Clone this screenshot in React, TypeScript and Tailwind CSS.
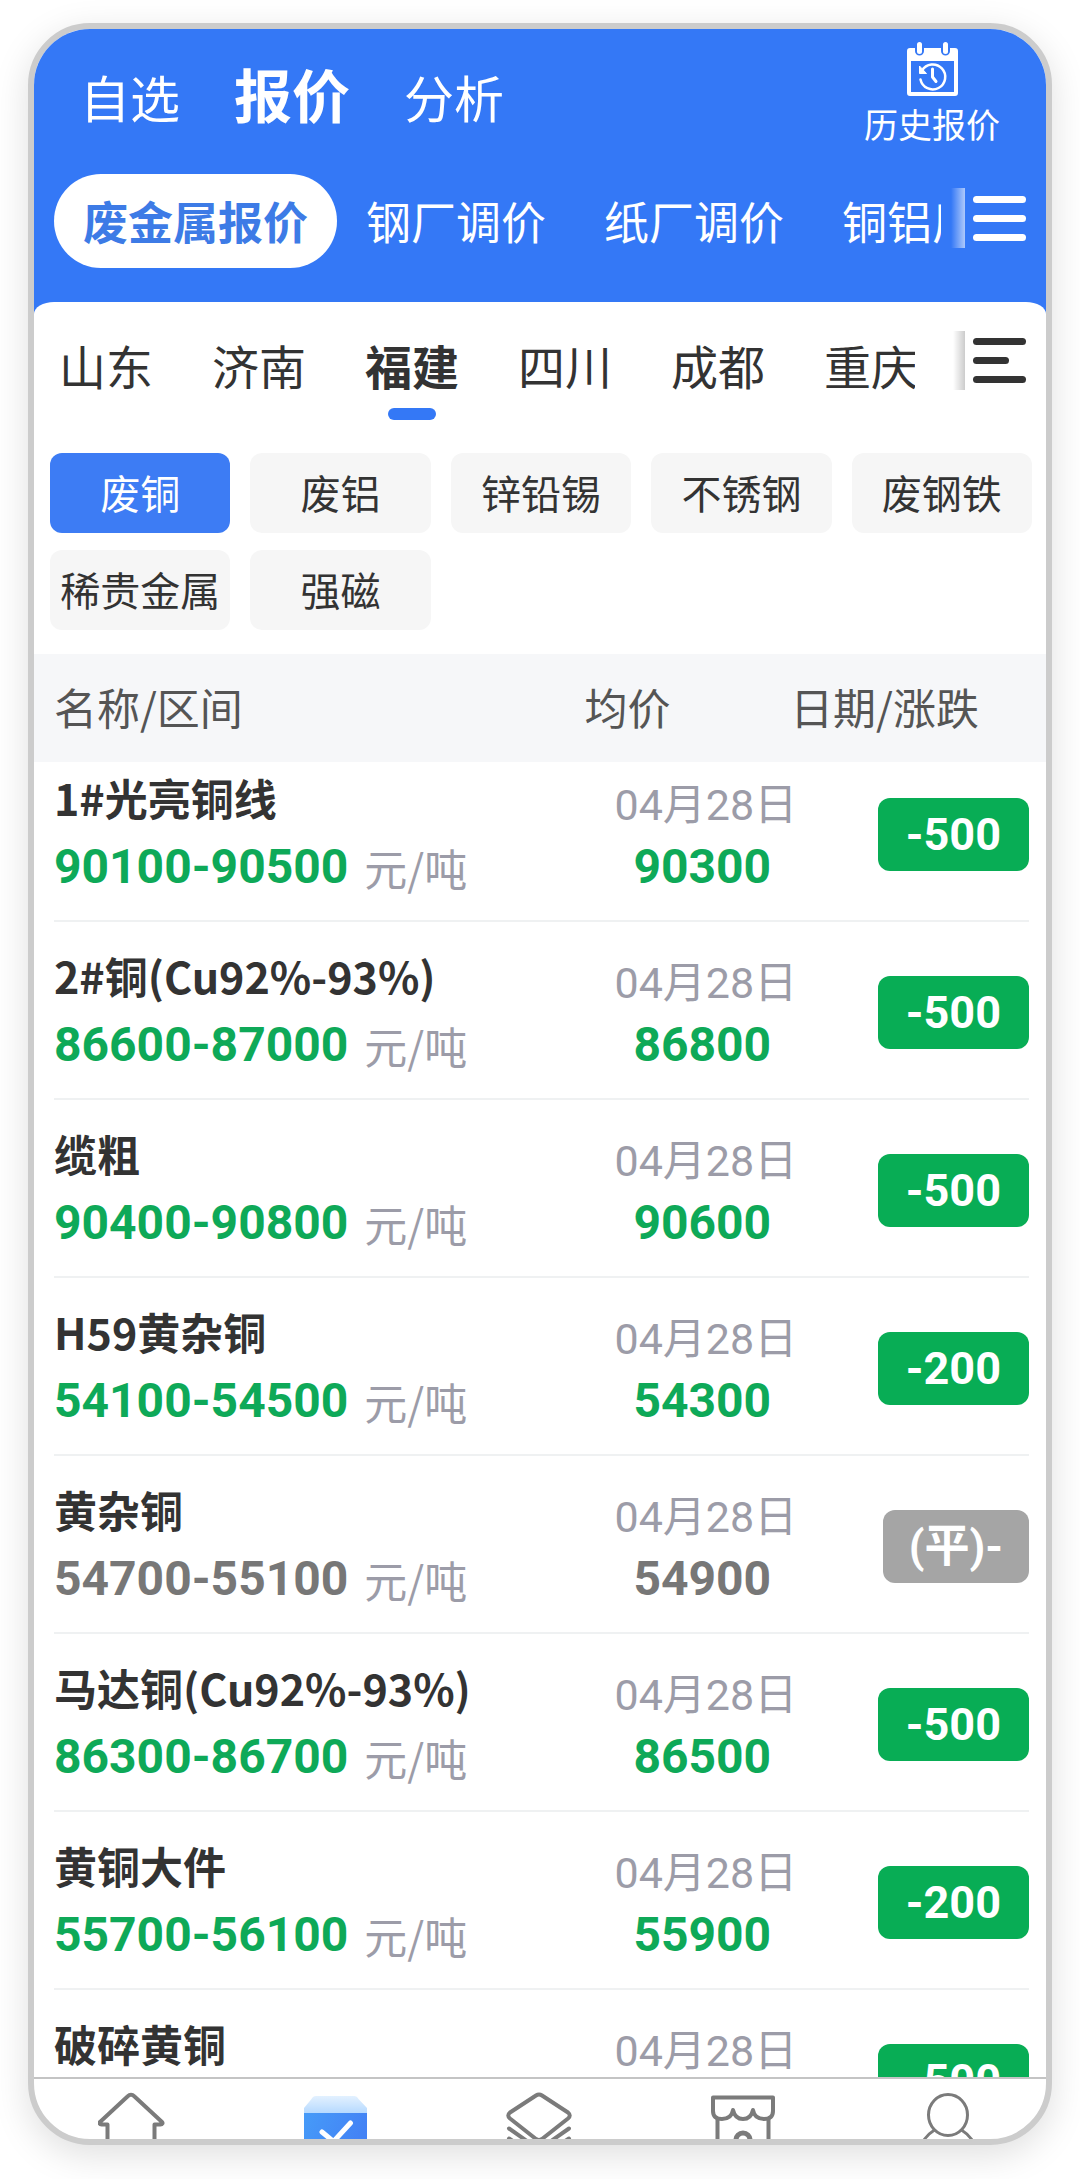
import { useState } from "react";
import { clsx } from "clsx";

const SECTIONS = ["自选", "报价", "分析"];
const MARKETS = ["废金属报价", "钢厂调价", "纸厂调价", "铜铝厂调价"];
const CITIES = ["山东", "济南", "福建", "四川", "成都", "重庆"];
const CATEGORIES = ["废铜", "废铝", "锌铅锡", "不锈钢", "废钢铁", "稀贵金属", "强磁"];

type Quote = {
  name: string;
  range: string;
  average: string;
  change: string;
  flat?: boolean;
};

const QUOTES: Quote[] = [
  { name: "1#光亮铜线", range: "90100-90500", average: "90300", change: "-500" },
  { name: "2#铜(Cu92%-93%)", range: "86600-87000", average: "86800", change: "-500" },
  { name: "缆粗", range: "90400-90800", average: "90600", change: "-500" },
  { name: "H59黄杂铜", range: "54100-54500", average: "54300", change: "-200" },
  { name: "黄杂铜", range: "54700-55100", average: "54900", change: "(平)-", flat: true },
  { name: "马达铜(Cu92%-93%)", range: "86300-86700", average: "86500", change: "-500" },
  { name: "黄铜大件", range: "55700-56100", average: "55900", change: "-200" },
  { name: "破碎黄铜", range: "53100-53500", average: "53300", change: "-500" },
];

export default function App() {
  const [section, setSection] = useState("报价");
  const [market, setMarket] = useState("废金属报价");
  const [city, setCity] = useState("福建");
  const [category, setCategory] = useState("废铜");

  return (
    <div className="h-dvh bg-white px-7 pt-[23px] pb-[34px] font-['Noto_Sans_CJK_SC',sans-serif] text-[#333]">
      <div className="flex h-full flex-col overflow-hidden rounded-[62px] border-6 border-[#ccc] bg-white shadow-[0_10px_36px_rgba(0,0,0,0.13)]">
        <header className="bg-[#3478f6] pb-[34px] text-white">
          <div className="flex items-start justify-between pr-[46px] pl-[46px]">
            <div className="flex items-baseline gap-[54px] pt-[34px]">
              {SECTIONS.map((s) => (
                <button
                  key={s}
                  onClick={() => setSection(s)}
                  className={clsx(
                    "leading-[60px] whitespace-nowrap",
                    s === section ? "text-[58px] font-bold" : "text-[50px]",
                  )}
                >
                  {s}
                </button>
              ))}
            </div>
            <button className="flex h-[117px] flex-col items-center gap-2 pt-[13px]">
              <HistoryIcon />
              <span className="text-[34px] leading-10 whitespace-nowrap">历史报价</span>
            </button>
          </div>

          <div className="mt-7 flex items-start pr-5 pl-5">
            <div className="flex min-w-0 flex-1 overflow-hidden">
              {MARKETS.map((m) => (
                <button
                  key={m}
                  onClick={() => setMarket(m)}
                  className={clsx(
                    "h-[94px] shrink-0 rounded-full px-[29px] text-[45px] leading-[66px] whitespace-nowrap",
                    m === market && "bg-white font-bold text-[#3d7be6]",
                  )}
                >
                  {m}
                </button>
              ))}
            </div>
            <div className="flex h-22 items-center">
              <span className="ml-2.5 h-15 w-3.5 bg-linear-to-r from-white/0 to-white/60" />
              <MenuButton label="全部报价" />
            </div>
          </div>
        </header>

        <div className="bg-[#3478f6]">
          <div className="rounded-t-[20px_12px] bg-white pt-[29px]">
            <div className="flex items-start pr-5 pl-[25px]">
              <div className="flex min-w-0 flex-1 gap-[59px] overflow-hidden">
                {CITIES.map((c) => (
                  <button
                    key={c}
                    onClick={() => setCity(c)}
                    className="flex shrink-0 flex-col items-center gap-[9px]"
                  >
                    <span
                      className={clsx(
                        "text-[47px] leading-[68px] whitespace-nowrap",
                        c === city && "font-bold",
                      )}
                    >
                      {c}
                    </span>
                    {c === city && <span className="h-3 w-12 rounded-full bg-[#3478f6]" />}
                  </button>
                ))}
              </div>
              <div className="flex h-[59px] items-center">
                <span className="ml-[38px] h-full w-3 bg-linear-to-r from-black/0 to-black/20" />
                <MenuButton label="全部地区" short />
              </div>
            </div>

            <div className="grid grid-cols-5 gap-x-5 gap-y-[17px] pt-[33px] pr-3.5 pb-[24px] pl-4">
              {CATEGORIES.map((c) => (
                <button
                  key={c}
                  onClick={() => setCategory(c)}
                  className={clsx(
                    "h-20 rounded-xl pb-0.5 text-[40px] leading-12 whitespace-nowrap",
                    c === category ? "bg-[#3d7cf4] text-white" : "bg-[#f6f6f6]",
                  )}
                >
                  {c}
                </button>
              ))}
            </div>
          </div>
        </div>

        <div className="min-h-0 flex-1 overflow-hidden">
          <table className="block">
            <thead className="relative z-10 block bg-[#f6f7f9]">
              <tr className="mr-[17px] ml-5 grid h-[108px] grid-cols-[54%_21.5%_24.5%] items-center pb-1 text-left text-[43px] leading-12 text-[#555]">
                <th className="font-normal">名称/区间</th>
                <th className="pl-1 font-normal">均价</th>
                <th className="font-normal whitespace-nowrap">日期/涨跌</th>
              </tr>
            </thead>
            {/* the list is scrolled a little way under the header */}
            <tbody className="-mt-[18px] block">
              {QUOTES.map((q) => (
                <QuoteRow key={q.name} quote={q} />
              ))}
            </tbody>
          </table>
        </div>

        <nav className="flex h-[62px] shrink-0 items-start justify-between overflow-hidden border-t-2 border-[#c4c4c4] px-16 pt-3 text-[#7b7b7b]">
          <a href="#home" aria-label="首页">
            <HomeIcon />
          </a>
          <a href="#quotes" aria-label="报价">
            <BoxIcon />
          </a>
          <a href="#supply" aria-label="供求">
            <LayersIcon />
          </a>
          <a href="#store" aria-label="商城">
            <StoreIcon />
          </a>
          <a href="#me" aria-label="我的">
            <UserIcon />
          </a>
        </nav>
      </div>
    </div>
  );
}

function QuoteRow({ quote }: { quote: Quote }) {
  const tone = quote.flat ? "text-[#777]" : "text-[#0ea958]";

  return (
    <tr className="mr-[17px] ml-5 grid h-[178px] grid-cols-[54%_21.5%_24.5%] border-b-2 border-[#eff1f2]">
      <td className="pt-[29px] whitespace-nowrap">
        <p className="text-[43px] leading-12 font-bold">{quote.name}</p>
        <p className="mt-[22px] flex items-center gap-4 leading-12">
          <span className={clsx("font-['Roboto',sans-serif] text-[48px] font-bold", tone)}>
            {quote.range}
          </span>
          <span className="text-[43px] text-[#9c9ca8]">元/吨</span>
        </p>
      </td>
      <td className="pt-[37px] pl-[34px] text-center font-['Roboto','Noto_Sans_CJK_SC',sans-serif] whitespace-nowrap">
        <p className="text-[43px] leading-12 text-[#9c9ca8]">04月28日</p>
        <p className={clsx("mt-3.5 text-[48px] leading-12 font-bold", tone)}>{quote.average}</p>
      </td>
      <td className="flex items-start justify-end pt-[54px]">
        <span
          className={clsx(
            "rounded-xl font-['Roboto','Noto_Sans_CJK_SC',sans-serif] text-[45px] leading-[73px] font-bold whitespace-nowrap text-white",
            quote.flat ? "bg-[#a5a5a5] px-[26px]" : "bg-[#08ad55] px-7",
          )}
        >
          {quote.change}
        </span>
      </td>
    </tr>
  );
}

function MenuButton({ label, short }: { label: string; short?: boolean }) {
  return (
    <button aria-label={label} className="ml-2 flex w-[53px] shrink-0 flex-col gap-3">
      <span className="h-[7px] w-full rounded-full bg-current" />
      <span className={clsx("h-[7px] rounded-full bg-current", short ? "w-9" : "w-full")} />
      <span className="h-[7px] w-full rounded-full bg-current" />
    </button>
  );
}

function HistoryIcon() {
  return (
    <svg width="51" height="54" viewBox="0 0 51 54" fill="none">
      <path
        fill="currentColor"
        fillRule="evenodd"
        d="M3 6h5v3a4.500 4.500 0 0 0 9 0V6h17v3a4.500 4.500 0 0 0 9 0V6h5a3 3 0 0 1 3 3v42a3 3 0 0 1-3 3H3a3 3 0 0 1-3-3V9a3 3 0 0 1 3-3Zm1 13v31h43V19H4Z"
      />
      <rect x="10" y="0" width="5" height="12" rx="2.500" fill="currentColor" />
      <rect x="36" y="0" width="5" height="12" rx="2.500" fill="currentColor" />
      <path
        d="M15 28.500a12.500 12.500 0 1 1-1.500 9"
        stroke="currentColor"
        strokeWidth="2.500"
        strokeLinecap="round"
      />
      <path d="M12.500 24v7.500h7Z" fill="currentColor" stroke="currentColor" strokeLinejoin="round" />
      <path
        d="M25.500 27v8l3.500 4.500"
        stroke="currentColor"
        strokeWidth="3"
        strokeLinecap="round"
        strokeLinejoin="round"
      />
    </svg>
  );
}

function HomeIcon() {
  return (
    <svg width="68" height="68" viewBox="0 0 68 68" fill="none">
      <path
        d="M9.500 66V33.500H3.500C1.500 33.500 1 32 2 31L29.500 5.500Q33 2 36.500 5.500L64 31C65 32 64.500 33.500 62.500 33.500H56.500V66Z"
        stroke="currentColor"
        strokeWidth="4"
        strokeLinejoin="round"
      />
    </svg>
  );
}

function BoxIcon() {
  return (
    <svg width="68" height="68" viewBox="0 0 68 68" fill="none">
      <defs>
        <linearGradient id="lid" x1="0" y1="0" x2="0" y2="1">
          <stop offset="0" stopColor="#e3f1ff" />
          <stop offset="1" stopColor="#b3d8ff" />
        </linearGradient>
        <linearGradient id="body" x1="0" y1="0" x2="1" y2="0.300">
          <stop offset="0" stopColor="#469bf8" />
          <stop offset="1" stopColor="#4382f5" />
        </linearGradient>
      </defs>
      <path d="M14 5h38q3 0 4.500 3L65 17v6H2v-6l7.500-9Q11 5 14 5Z" fill="url(#lid)" />
      <path d="M2 22h63v40a4 4 0 0 1-4 4H6a4 4 0 0 1-4-4Z" fill="url(#body)" />
      <path
        d="M20 41l11.500 9.500L48.500 32"
        stroke="#fff"
        strokeWidth="5"
        strokeLinecap="round"
        strokeLinejoin="round"
      />
    </svg>
  );
}

function LayersIcon() {
  return (
    <svg
      width="68"
      height="68"
      viewBox="0 0 68 68"
      fill="none"
      stroke="currentColor"
      strokeWidth="4"
      strokeLinecap="round"
      strokeLinejoin="round"
    >
      <path d="M30 4.500Q33 2.500 36 4.500L62 21.500Q65.500 24.500 62 27.500L36 48Q33 50 30 48L4 27.500Q.5 24.500 4 21.500Z" />
      <path d="M3 37.500L33 58.500L63 37.500" />
      <path d="M3 47.500L33 67L63 47.500" />
    </svg>
  );
}

function StoreIcon() {
  return (
    <svg
      width="68"
      height="68"
      viewBox="0 0 68 68"
      fill="none"
      stroke="currentColor"
      strokeWidth="4"
      strokeLinejoin="round"
    >
      <path d="M3 6.500H63V20Q63 28 54 28Q44.500 28 43 19Q41 28 33 28Q25 28 23 19Q21.500 28 12 28Q3 28 3 20Z" />
      <path d="M7.500 27V64H58.500V27" />
      <path d="M26 64V49a7 7 0 0 1 14 0V64" strokeWidth="5" />
    </svg>
  );
}

function UserIcon() {
  return (
    <svg
      width="68"
      height="68"
      viewBox="0 0 68 68"
      fill="none"
      stroke="currentColor"
      strokeWidth="3"
    >
      <ellipse cx="34" cy="24" rx="19.500" ry="20.500" />
      <path d="M20.500 39Q6 48 4 66H64Q62 48 47.500 39" />
    </svg>
  );
}
